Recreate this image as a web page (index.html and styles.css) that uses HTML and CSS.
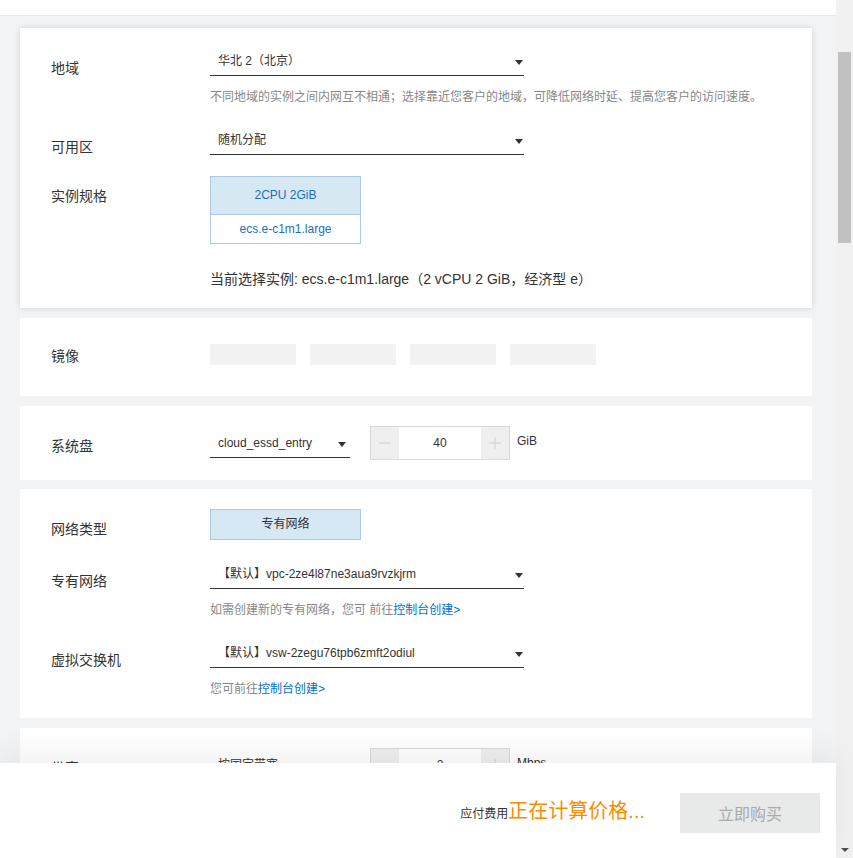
FILE: index.html
```html
<!DOCTYPE html>
<html lang="zh-CN">
<head>
    <meta charset="UTF-8">
    <meta name="viewport" content="width=device-width, initial-scale=1.0">
    <title>云服务器 ECS 购买</title>
    <link rel="stylesheet" href="styles.css">
</head>
<body>
    <div class="window">
        <div class="page">
            <div class="topbar"></div>

            <div class="content">
                <!-- 基础配置 -->
                <section class="card card-active">
                    <div class="row">
                        <div class="label">地域</div>
                        <div class="field">
                            <div class="select select-wide"><span>华北 2（北京）</span><i class="caret"></i></div>
                            <p class="hint">不同地域的实例之间内网互不相通；选择靠近您客户的地域，可降低网络时延、提高您客户的访问速度。</p>
                        </div>
                    </div>
                    <div class="row">
                        <div class="label">可用区</div>
                        <div class="field">
                            <div class="select select-wide"><span>随机分配</span><i class="caret"></i></div>
                        </div>
                    </div>
                    <div class="row">
                        <div class="label">实例规格</div>
                        <div class="field">
                            <div class="spec">
                                <div class="spec-head">2CPU 2GiB</div>
                                <div class="spec-body">ecs.e-c1m1.large</div>
                            </div>
                            <p class="current">当前选择实例: ecs.e-c1m1.large（2 vCPU 2 GiB，经济型 e）</p>
                        </div>
                    </div>
                </section>

                <!-- 镜像 -->
                <section class="card card-image">
                    <div class="row">
                        <div class="label">镜像</div>
                        <div class="field placeholders">
                            <span class="ph"></span>
                            <span class="ph"></span>
                            <span class="ph"></span>
                            <span class="ph"></span>
                        </div>
                    </div>
                </section>

                <!-- 存储 -->
                <section class="card card-inline">
                    <div class="row">
                        <div class="label">系统盘</div>
                        <div class="field inline">
                            <div class="select select-short"><span>cloud_essd_entry</span><i class="caret"></i></div>
                            <div class="numbox">
                                <span class="step"><svg width="12" height="12" viewBox="0 0 12 12"><path d="M0 6h12" stroke="#cfcfcf" stroke-width="1"/></svg></span>
                                <span class="num">40</span>
                                <span class="step"><svg width="12" height="12" viewBox="0 0 12 12"><path d="M0 6h12M6 0v12" stroke="#cfcfcf" stroke-width="1"/></svg></span>
                            </div>
                            <span class="unit">GiB</span>
                        </div>
                    </div>
                </section>

                <!-- 网络 -->
                <section class="card card-network">
                    <div class="row">
                        <div class="label">网络类型</div>
                        <div class="field">
                            <div class="option">专有网络</div>
                        </div>
                    </div>
                    <div class="row">
                        <div class="label">专有网络</div>
                        <div class="field">
                            <div class="select select-wide"><span>【默认】vpc-2ze4l87ne3aua9rvzkjrm</span><i class="caret"></i></div>
                            <p class="hint">如需创建新的专有网络，您可 前往<a href="#">控制台创建&gt;</a></p>
                        </div>
                    </div>
                    <div class="row">
                        <div class="label">虚拟交换机</div>
                        <div class="field">
                            <div class="select select-wide"><span>【默认】vsw-2zegu76tpb6zmft2odiul</span><i class="caret"></i></div>
                            <p class="hint">您可前往<a href="#">控制台创建&gt;</a></p>
                        </div>
                    </div>
                </section>

                <!-- 带宽 -->
                <section class="card card-inline">
                    <div class="row">
                        <div class="label">带宽</div>
                        <div class="field inline">
                            <div class="select select-short"><span>按固定带宽</span><i class="caret"></i></div>
                            <div class="numbox">
                                <span class="step"><svg width="12" height="12" viewBox="0 0 12 12"><path d="M0 6h12" stroke="#cfcfcf" stroke-width="1"/></svg></span>
                                <span class="num">2</span>
                                <span class="step"><svg width="12" height="12" viewBox="0 0 12 12"><path d="M0 6h12M6 0v12" stroke="#cfcfcf" stroke-width="1"/></svg></span>
                            </div>
                            <span class="unit">Mbps</span>
                        </div>
                    </div>
                </section>
            </div>

            <!-- 底部购买栏 -->
            <footer class="buybar">
                <div class="price">
                    <span class="price-label">应付费用</span><span class="price-value">正在计算价格...</span>
                </div>
                <button class="buy" disabled>立即购买</button>
            </footer>
        </div>

        <div class="scrollbar">
            <div class="thumb"></div>
            <i class="arrow-down"></i>
        </div>
    </div>
</body>
</html>
```

FILE: styles.css
```css
body {
    margin: 0;
    font-family: "Liberation Sans", "Noto Sans CJK SC", sans-serif;
    color: #333;
    background: #f2f3f5;
    overflow: hidden;
}
.window {
    display: flex;
    height: 100vh;
}
.page {
    flex: 1;
    display: flex;
    flex-direction: column;
    min-width: 0;
}
.topbar {
    height: 15px;
    background: #fff;
    border-bottom: 1px solid #e6e7e9;
    flex-shrink: 0;
}
.content {
    flex: 1;
    overflow: hidden;
    padding: 12px 24px 0 20px;
    display: flex;
    flex-direction: column;
    gap: 10px;
}
.card {
    background: #fff;
    padding: 20px 31px 19px;
    flex-shrink: 0;
}
.card-active {
    box-shadow: 0 0 6px rgba(0, 0, 0, 0.14);
}
.card-image {
    padding: 26px 31px 31px;
}
.card-inline {
    padding: 20px 31px 20px;
}
.card-network {
    padding: 20px 31px 20px;
    margin-top: -1px;
}
.row {
    display: flex;
    align-items: flex-start;
}
.row + .row {
    margin-top: 21px;
}
.label {
    width: 159px;
    flex-shrink: 0;
    font-size: 14px;
    line-height: 20px;
    padding-top: 10px;
    margin-bottom: -2px;
}
.card-image .label {
    padding-top: 2px;
    margin-bottom: -1px;
}
.field {
    flex: 1;
}
.select {
    box-sizing: border-box;
    height: 28px;
    border-bottom: 1px solid #333;
    padding: 0 1px 0 8px;
    display: flex;
    align-items: center;
    justify-content: space-between;
    font-size: 12px;
    line-height: 27px;
    color: #333;
}
.select-wide {
    width: 314px;
}
.select-short {
    width: 140px;
    margin-top: 4px;
    padding-right: 4px;
}
.caret {
    width: 0;
    height: 0;
    border-left: 4px solid transparent;
    border-right: 4px solid transparent;
    border-top: 5px solid #333;
    margin-top: 1px;
}
.hint {
    margin: 12px 0 0;
    font-size: 12px;
    line-height: 18px;
    color: #888;
}
.hint a {
    color: #0070cc;
    text-decoration: none;
}
.spec {
    width: 151px;
    box-sizing: border-box;
    border: 1px solid #a9cbe8;
    font-size: 12px;
    text-align: center;
    color: #1a6fc4;
}
.spec-head {
    height: 37px;
    line-height: 37px;
    background: #d7e8f5;
    border-bottom: 1px solid #a9cbe8;
}
.spec-body {
    height: 28px;
    line-height: 28px;
}
.current {
    margin: 25px 0 0;
    font-size: 14px;
    line-height: 20px;
}
.placeholders {
    display: flex;
    gap: 14px;
}
.ph {
    width: 86px;
    height: 21px;
    background: #f2f2f2;
}
.inline {
    display: flex;
    align-items: flex-start;
}
.numbox {
    box-sizing: border-box;
    width: 140px;
    height: 34px;
    margin-left: 20px;
    border: 1px solid #d9d9d9;
    display: flex;
}
.step {
    width: 28px;
    background: #efefef;
    display: flex;
    align-items: center;
    justify-content: center;
}
.num {
    flex: 1;
    text-align: center;
    font-size: 12px;
    line-height: 32px;
    background: #fff;
}
.unit {
    margin-left: 7px;
    font-size: 12px;
    line-height: 30px;
}
.option {
    width: 151px;
    height: 31px;
    box-sizing: border-box;
    border: 1px solid #a9cbe8;
    background: #d7e8f5;
    text-align: center;
    font-size: 12px;
    line-height: 29px;
}
.buybar {
    position: relative;
    height: 95px;
    flex-shrink: 0;
    background: #fff;
    box-shadow: 0 -10px 30px rgba(0, 0, 0, 0.06);
    display: flex;
    align-items: center;
    justify-content: flex-end;
    padding: 5px 16px 0 0;
    box-sizing: border-box;
}
.price {
    display: flex;
    align-items: baseline;
    margin-right: 35px;
    margin-bottom: 7px;
}
.price-label {
    font-size: 12px;
    color: #333;
}
.price-value {
    font-size: 20px;
    color: #ff8a00;
}
.buy {
    width: 140px;
    height: 40px;
    border: none;
    background: #e8e9e9;
    color: #aaa;
    font-family: inherit;
    font-size: 16px;
}
.scrollbar {
    width: 17px;
    flex-shrink: 0;
    background: #f1f1f1;
    display: flex;
    flex-direction: column;
    align-items: center;
}
.thumb {
    width: 13px;
    height: 191px;
    margin-top: 52px;
    background: #c1c1c1;
}
.arrow-down {
    margin-top: auto;
    margin-bottom: 6px;
    width: 0;
    height: 0;
    border-left: 4px solid transparent;
    border-right: 4px solid transparent;
    border-top: 4px solid #505050;
}
```
